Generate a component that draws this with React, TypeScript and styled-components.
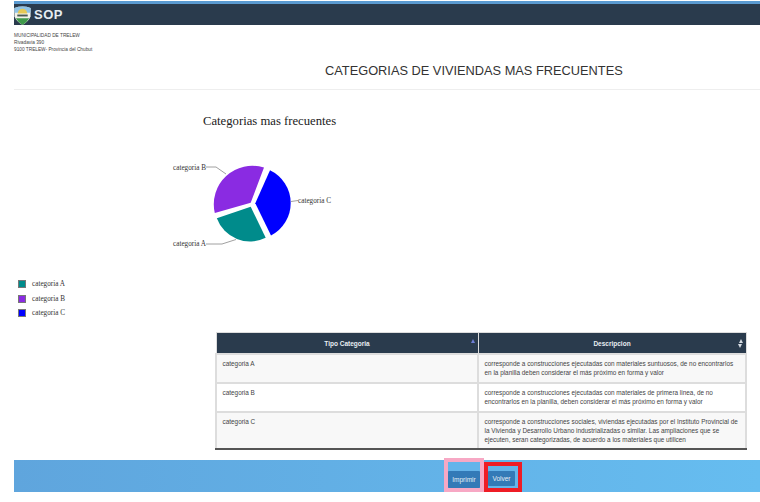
import styled, { createGlobalStyle } from 'styled-components';

const GlobalStyle = createGlobalStyle`
  html, body {
    margin: 0;
    padding: 0;
    background: #fff;
  }
  body {
    width: 760px;
    height: 502px;
    overflow: hidden;
    font-family: "Liberation Sans", Arial, sans-serif;
  }
`;

const rows = [
  {
    tipo: 'categoria A',
    size: 29,
    lines: [
      'corresponde a construcciones ejecutadas con materiales suntuosos, de no encontrarlos',
      'en la planilla deben considerar el más próximo en forma y valor',
    ],
  },
  {
    tipo: 'categoria B',
    size: 29,
    lines: [
      'corresponde a construcciones ejecutadas con materiales de primera linea, de no',
      'encontrarlos en la planilla, deben considerar el más próximo en forma y valor',
    ],
  },
  {
    tipo: 'categoria C',
    size: 37,
    lines: [
      'corresponde a construcciones sociales, viviendas ejecutadas por el Instituto Provincial de',
      'la Vivienda y Desarrollo Urbano industrializadas o similar. Las ampliaciones que se',
      'ejecuten, seran categorizadas, de acuerdo a los materiales que utilicen',
    ],
  },
];

const legend = [
  { label: 'categoria A', color: '#008b8b' },
  { label: 'categoria B', color: '#8a2be2' },
  { label: 'categoria C', color: '#0000ff' },
];

const Logo = () => (
  <svg width="17" height="19" viewBox="0 0 17 20">
    <path d="M0 2 Q8.5 -1 17 2 L17 11 Q15 16 8.5 20 Q2 16 0 11 Z" fill="#f2f2ea" />
    <path d="M0 2 Q8.5 -1 17 2 L17 7 L0 7 Z" fill="#8fc3e6" />
    <path d="M3.5 8 A5 5 0 0 1 13.5 8 Z" fill="#e6c955" />
    <rect x="3" y="9" width="11" height="2" fill="#4a5a50" />
    <path d="M1.5 13 L15.5 13 Q13.5 17 8.5 20 Q3.5 17 1.5 13 Z" fill="#3f9a4a" />
  </svg>
);

const Chart = () => (
  <svg width="200" height="100" viewBox="150 150 200 100">
    <g fill="none" stroke="#888" strokeWidth="0.8">
      <path d="M206 167 H216 L226 174" />
      <path d="M291 201.5 L298 200.5" />
      <path d="M206 244 H222 L236 239.5" />
    </g>
    <path d="M250.7 202.7 L214.8 213 A38.5 38.5 0 0 1 264 167.6 Z" fill="#8a2be2" />
    <path d="M255.3 203.3 L270 170.2 A36.5 36.5 0 0 1 271 235.5 Z" fill="#0000ff" />
    <path d="M250.7 206.7 L265.7 237.8 A35.5 35.5 0 0 1 216.8 218.3 Z" fill="#008b8b" />
    <PieLabel x="173" y="169.5">categoria B</PieLabel>
    <PieLabel x="298" y="203">categoria C</PieLabel>
    <PieLabel x="173" y="246">categoria A</PieLabel>
  </svg>
);

export default function App() {
  return (
    <Page>
      <GlobalStyle />
      <TopBar>
        <Logo />
        <Brand>SOP</Brand>
      </TopBar>
      <Address>
        <div>MUNICIPALIDAD DE TRELEW</div>
        <div>Rivadavia 390</div>
        <div>9100 TRELEW- Provincia del Chubut</div>
      </Address>
      <Title>CATEGORIAS DE VIVIENDAS MAS FRECUENTES</Title>
      <Rule />
      <ChartArea>
        <ChartTitle>Categorias mas frecuentes</ChartTitle>
        <Chart />
      </ChartArea>
      <Legend>
        {legend.map((item) => (
          <LegendRow key={item.label}>
            <Swatch $color={item.color} />
            {item.label}
          </LegendRow>
        ))}
      </Legend>
      <TableWrap>
        <Table>
          <thead>
            <tr>
              <Th $width={261}>
                Tipo Categoria
                <SortUp />
              </Th>
              <Th>
                Descripcion
                <SortBoth />
              </Th>
            </tr>
          </thead>
          <tbody>
            {rows.map((row, i) => (
              <Row key={row.tipo} $odd={i % 2 === 0} $size={row.size}>
                <Td>{row.tipo}</Td>
                <Td>
                  {row.lines.map((line) => (
                    <div key={line}>{line}</div>
                  ))}
                </Td>
              </Row>
            ))}
          </tbody>
        </Table>
      </TableWrap>
      <Footer>
        <PrintFrame>
          <ActionButton $width={32} $lift={0}>Imprimir</ActionButton>
        </PrintFrame>
        <BackFrame>
          <ActionButton $width={27} $lift={2}>Volver</ActionButton>
        </BackFrame>
      </Footer>
    </Page>
  );
}

const Page = styled.div`
  width: 746px;
  height: 502px;
  margin-left: 14px;
  display: flex;
  flex-direction: column;
`;

const TopBar = styled.div`
  height: 21px;
  margin-top: 1px;
  border-top: 3px solid #5b9bd1;
  background: #2a3b4d;
  display: flex;
  align-items: flex-end;
  gap: 3px;
`;

const Brand = styled.span`
  align-self: center;
  color: #e6edf2;
  font-size: 13px;
  line-height: 15px;
  font-weight: bold;
  letter-spacing: 0.5px;
`;

const Address = styled.div`
  margin-top: 7px;
  font-size: 4.75px;
  line-height: 7px;
  color: #444;
`;

const Title = styled.h1`
  margin: 10px 0 0 0;
  padding-left: 311px;
  font-size: 12.8px;
  line-height: 16px;
  font-weight: normal;
  color: #333;
  white-space: nowrap;
`;

const Rule = styled.div`
  margin-top: 10px;
  height: 1px;
  background: #eee;
`;

const ChartArea = styled.div`
  display: flex;
  flex-direction: column;
  padding-left: 136px;
  color: #222;
`;

const ChartTitle = styled.div`
  margin: 23px 0 21px 53px;
  font-family: "Liberation Serif", serif;
  font-size: 12.7px;
  line-height: 16px;
`;

const PieLabel = styled.text`
  font-family: "Liberation Serif", serif;
  font-size: 7.2px;
  fill: #333;
`;

const Legend = styled.div`
  margin-top: 30px;
  padding-left: 4px;
  display: flex;
  flex-direction: column;
  gap: 6.5px;
  font-family: "Liberation Serif", serif;
  font-size: 7.2px;
  color: #333;
`;

const LegendRow = styled.div`
  display: flex;
  align-items: center;
  height: 8px;
`;

const Swatch = styled.span<{ $color: string }>`
  width: 8px;
  height: 8px;
  margin-right: 6px;
  background: ${(p) => p.$color};
  border: 1px solid #777;
  box-sizing: border-box;
`;

const TableWrap = styled.div`
  margin-top: 15px;
  padding-left: 201px;
`;

const Table = styled.table`
  width: 532px;
  border-collapse: collapse;
  table-layout: fixed;
  font-size: 6.4px;
  color: #444;
`;

const Th = styled.th<{ $width?: number }>`
  position: relative;
  height: 20px;
  padding: 0;
  background: #2a3b4d;
  color: #e8edf2;
  font-size: 6.5px;
  border: 1px solid #ddd;
  ${(p) => (p.$width ? `width: ${p.$width}px;` : '')}
`;

const SortUp = styled.span`
  position: absolute;
  top: 6px;
  right: 3px;
  width: 0;
  height: 0;
  border-left: 2.5px solid transparent;
  border-right: 2.5px solid transparent;
  border-bottom: 4px solid #6f7fd6;
`;

const SortBoth = styled(SortUp)`
  border-bottom-color: #d5dbe2;
  &::after {
    content: '';
    position: absolute;
    left: -2.5px;
    top: 5px;
    width: 0;
    height: 0;
    border-left: 2.5px solid transparent;
    border-right: 2.5px solid transparent;
    border-top: 4px solid #d5dbe2;
  }
`;

const Row = styled.tr<{ $odd: boolean; $size: number }>`
  background: ${(p) => (p.$odd ? '#f8f8f8' : '#fff')};
  height: ${(p) => p.$size}px;

  &:last-child td {
    border-bottom: 2px solid #555;
  }
`;

const Td = styled.td`
  padding: 4px 5.5px 0;
  vertical-align: top;
  line-height: 9.2px;
  border: 2px solid #ddd;
  white-space: nowrap;
`;

const Footer = styled.div`
  margin-top: 10px;
  height: 32px;
  padding-left: 430px;
  background: linear-gradient(90deg, #5fa5dd, #66bdf0);
  display: flex;
  align-items: flex-end;
`;

const PrintFrame = styled.div`
  box-sizing: border-box;
  flex: none;
  width: 40px;
  height: 34px;
  border: 4px solid #f7a8c4;
  background: #64b4ea;
  display: flex;
  align-items: flex-end;
`;

const BackFrame = styled.div`
  box-sizing: border-box;
  flex: none;
  width: 38px;
  height: 30px;
  border: 4px solid #ee1c25;
  background: #64b4ea;
  display: flex;
  align-items: flex-end;
`;

const ActionButton = styled.button<{ $width: number; $lift: number }>`
  width: ${(p) => p.$width}px;
  height: ${(p) => 17 - p.$lift}px;
  margin-bottom: ${(p) => p.$lift}px;
  padding: 0;
  border: none;
  border-radius: 1px;
  background: #337ab7;
  color: #e6eef5;
  font-family: "Liberation Sans", sans-serif;
  font-size: 6.5px;
`;
